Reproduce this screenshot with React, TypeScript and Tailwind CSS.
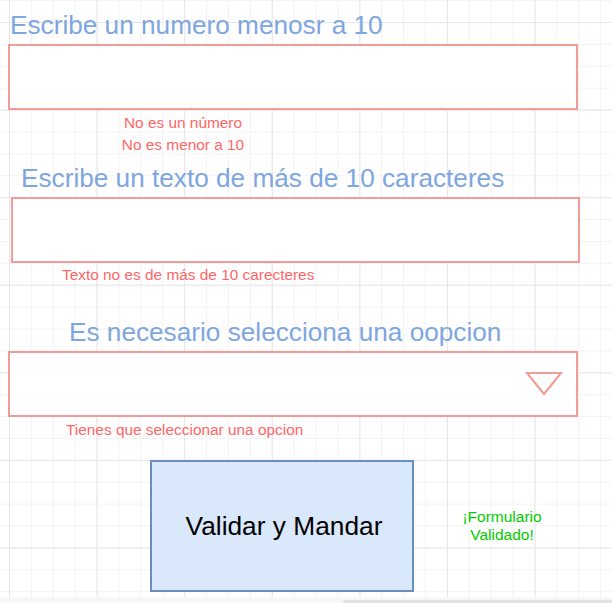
export default function App() {
  return (
    <div className="relative w-[612px] h-[603px] overflow-hidden bg-white font-['Liberation_Sans',Arial,sans-serif] [background-image:linear-gradient(to_right,#e6e6e6_1px,transparent_1px),linear-gradient(to_bottom,#e6e6e6_1px,transparent_1px),linear-gradient(to_right,#f3f3f3_1px,transparent_1px),linear-gradient(to_bottom,#f3f3f3_1px,transparent_1px)] [background-size:87.6px_87.6px,87.6px_87.6px,21.9px_21.9px,21.9px_21.9px] [background-position:9px_22px,9px_22px,9px_22px,9px_22px]">
      <div className="flex flex-col items-start">
        {/* campo numero */}
        <h2 className="mt-[11px] ml-[10px] text-[26.2px] leading-[28px] text-[#7ea6e0] whitespace-nowrap">
          Escribe un numero menosr a 10
        </h2>
        <div className="mt-[5px] ml-[8px] w-[570px] h-[66px] border-2 border-[#f19c99] bg-white" />
        <div className="mt-[2px] ml-[118px] w-[130px] flex flex-col items-center text-[15.4px] leading-[22px] text-[#ff6666]">
          <span>No es un número</span>
          <span>No es menor a 10</span>
        </div>

        {/* campo texto */}
        <h2 className="mt-[8px] ml-[21px] text-[26.2px] leading-[28px] text-[#7ea6e0] whitespace-nowrap">
          Escribe un texto de más de 10 caracteres
        </h2>
        <div className="mt-[5px] ml-[11px] w-[569px] h-[66px] border-2 border-[#f19c99] bg-white" />
        <p className="mt-[1px] ml-[62px] text-[15.4px] leading-[22px] text-[#ff6666]">
          Texto no es de más de 10 carecteres
        </p>

        {/* select */}
        <h2 className="mt-[32px] ml-[69px] text-[26.2px] leading-[28px] text-[#7ea6e0] whitespace-nowrap">
          Es necesario selecciona una oopcion
        </h2>
        <div className="mt-[5px] ml-[8px] w-[570px] h-[66px] border-2 border-[#f19c99] bg-white flex items-center justify-end pr-[13px]">
          <svg width="38" height="26" viewBox="0 0 38 26">
            <polygon points="2,2 36,2 19,23" fill="none" stroke="#f19c99" strokeWidth="2.2" />
          </svg>
        </div>
        <p className="mt-[2px] ml-[66px] text-[15.4px] leading-[22px] text-[#ff6666]">
          Tienes que seleccionar una opcion
        </p>

        {/* boton */}
        <div className="mt-[19px] flex items-center">
          <button className="ml-[150px] w-[264px] h-[132px] pl-[4px] pt-[2px] border-2 border-[#6c8ebf] bg-[#dae8fc] text-[26.3px] text-black">
            Validar y Mandar
          </button>
          <div className="ml-[38px] w-[100px] flex flex-col items-center text-[15.5px] leading-[18px] text-[#00cc00]">
            <span>¡Formulario</span>
            <span>Validado!</span>
          </div>
        </div>
      </div>

      {/* barra de desplazamiento */}
      <div className="absolute left-0 bottom-0 w-full h-[6px] bg-[#f7f7f7]">
        <div className="absolute left-[343px] right-0 bottom-0 h-[3px] rounded-l-full bg-[#e3e3e3]" />
      </div>
    </div>
  );
}
